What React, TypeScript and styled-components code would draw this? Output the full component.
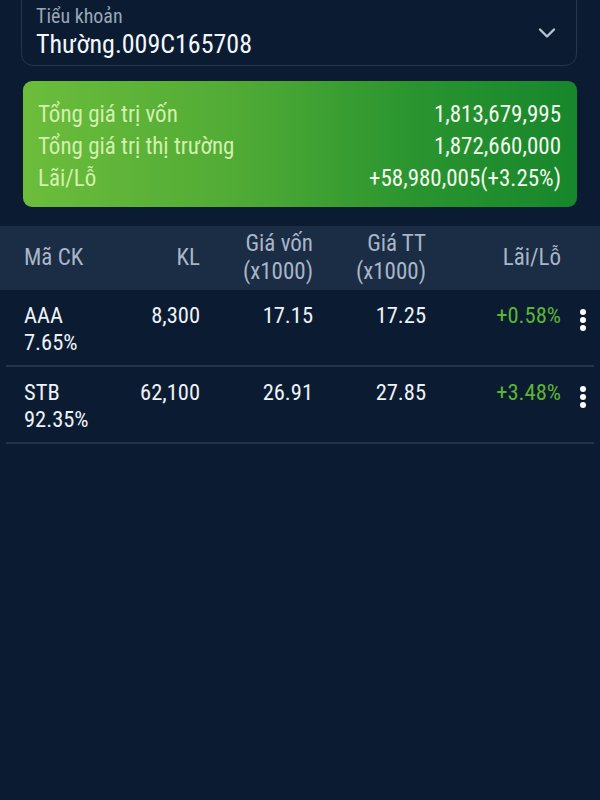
import React from "react";
import styled, { createGlobalStyle } from "styled-components";

const GlobalStyle = createGlobalStyle`
  html, body {
    margin: 0;
    padding: 0;
    background: #0b1c32;
  }
  body {
    font-family: "Roboto Condensed", Roboto, "Liberation Sans", sans-serif;
    font-stretch: condensed;
    color: #eef2f6;
    -webkit-font-smoothing: antialiased;
  }
`;

const Page = styled.div`
  width: 600px;
  min-height: 800px;
  background: #0b1c32;
  overflow: hidden;
`;

const Top = styled.div`
  padding: 0 23px 0 21px;
  display: flex;
  flex-direction: column;
  gap: 15px;
`;

const Select = styled.div`
  margin-top: -14px;
  height: 80px;
  box-sizing: border-box;
  border: 1px solid #26364c;
  border-radius: 12px;
  padding: 17px 20px 0 14px;
  display: flex;
  align-items: flex-start;
  justify-content: space-between;
`;

const SelectText = styled.div`
  display: flex;
  flex-direction: column;
`;

const SelectLabel = styled.div`
  font-size: 20px;
  line-height: 25px;
  color: #9aa6b6;
`;

const SelectValue = styled.div`
  font-size: 26px;
  line-height: 30px;
  color: #f4f7fa;
`;

const Chevron = styled.svg`
  margin-top: 23px;
  width: 18px;
  height: 12px;
`;

const Card = styled.div`
  margin-left: 2px;
  border-radius: 9px;
  background: linear-gradient(90deg, #6cbd3b 0%, #4faa35 40%, #2a952f 70%, #17862c 100%);
  padding: 18px 16px 12px 15px;
  display: flex;
  flex-direction: column;
`;

const CardRow = styled.div`
  display: flex;
  justify-content: space-between;
  font-size: 23px;
  line-height: 32px;
`;

const CardLabel = styled.span`
  color: #d4f0ae;
`;

const CardValue = styled.span`
  color: #f3f8ee;
`;

const Table = styled.div`
  margin-top: 19px;
  display: flex;
  flex-direction: column;
`;

const Grid = styled.div`
  display: grid;
  grid-template-columns: 106px 70px 113px 113px 135px 1fr;
  box-sizing: border-box;
`;

const HeaderRow = styled(Grid)`
  background: #1a2d45;
  height: 64px;
  padding-left: 24px;
  align-items: center;
  font-size: 23px;
  line-height: 28px;
  color: #a9b6c6;
`;

const HeadCell = styled.div<{ $left?: boolean }>`
  text-align: ${(p) => (p.$left ? "left" : "right")};
`;

const Body = styled.div`
  padding: 0 6px;
`;

const Row = styled(Grid)`
  height: 77px;
  padding: 12px 0 0 18px;
  border-bottom: 2px solid #22344b;
  font-size: 22.5px;
  line-height: 27px;
  align-items: start;
`;

const Cell = styled.div<{ $left?: boolean; $up?: boolean }>`
  text-align: ${(p) => (p.$left ? "left" : "right")};
  color: ${(p) => (p.$up ? "#5bb432" : "#eef2f6")};
`;

const MoreButton = styled.div`
  justify-self: end;
  margin-right: 8px;
  margin-top: 7px;
  display: flex;
  flex-direction: column;
  gap: 2px;
`;

const Dot = styled.span`
  width: 6px;
  height: 6px;
  border-radius: 50%;
  background: #ffffff;
`;

const holdings = [
  { code: "AAA", weight: "7.65%", kl: "8,300", cost: "17.15", price: "17.25", pl: "+0.58%" },
  { code: "STB", weight: "92.35%", kl: "62,100", cost: "26.91", price: "27.85", pl: "+3.48%" },
];

export default function App() {
  return (
    <Page>
      <GlobalStyle />
      <Top>
        <Select>
          <SelectText>
            <SelectLabel>Tiểu khoản</SelectLabel>
            <SelectValue>Thường.009C165708</SelectValue>
          </SelectText>
          <Chevron viewBox="0 0 18 12">
            <path d="M2 2.5 L9 9.5 L16 2.5" fill="none" stroke="#b9c1cc" strokeWidth="2.4" strokeLinecap="round" strokeLinejoin="round" />
          </Chevron>
        </Select>
        <Card>
          <CardRow>
            <CardLabel>Tổng giá trị vốn</CardLabel>
            <CardValue>1,813,679,995</CardValue>
          </CardRow>
          <CardRow>
            <CardLabel>Tổng giá trị thị trường</CardLabel>
            <CardValue>1,872,660,000</CardValue>
          </CardRow>
          <CardRow>
            <CardLabel>Lãi/Lỗ</CardLabel>
            <CardValue>+58,980,005(+3.25%)</CardValue>
          </CardRow>
        </Card>
      </Top>
      <Table>
        <HeaderRow>
          <HeadCell $left>Mã CK</HeadCell>
          <HeadCell>KL</HeadCell>
          <HeadCell>
            Giá vốn
            <br />
            (x1000)
          </HeadCell>
          <HeadCell>
            Giá TT
            <br />
            (x1000)
          </HeadCell>
          <HeadCell>Lãi/Lỗ</HeadCell>
          <div />
        </HeaderRow>
        <Body>
          {holdings.map((h) => (
            <Row key={h.code}>
              <Cell $left>
                {h.code}
                <br />
                {h.weight}
              </Cell>
              <Cell>{h.kl}</Cell>
              <Cell>{h.cost}</Cell>
              <Cell>{h.price}</Cell>
              <Cell $up>{h.pl}</Cell>
              <MoreButton>
                <Dot />
                <Dot />
                <Dot />
              </MoreButton>
            </Row>
          ))}
        </Body>
      </Table>
    </Page>
  );
}
